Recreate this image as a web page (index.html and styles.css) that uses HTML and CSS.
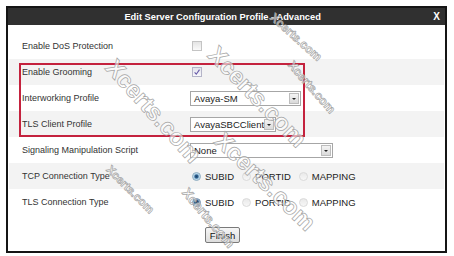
FILE: index.html
```html
<!DOCTYPE html>
<html lang="en">
<head>
    <meta charset="UTF-8">
    <title>Edit Server Configuration Profile - Advanced</title>
    <link rel="stylesheet" href="styles.css">
</head>
<body>
<div class="page">
    <div class="dialog">
        <div class="dialog-head">
            <span class="title">Edit Server Configuration Profile - Advanced</span>
            <span class="close">X</span>
        </div>
        <div class="dialog-body">
            <div class="row">
                <div class="label">Enable DoS Protection</div>
                <div class="value"><span class="check"></span></div>
            </div>
            <div class="row alt">
                <div class="label">Enable Grooming</div>
                <div class="value">
                    <span class="check checked">
                        <svg width="8" height="8" viewBox="0 0 8 8"><path d="M1.6 4.3 L3.3 6.2 L6.5 1.6" fill="none" stroke="#6659a8" stroke-width="1.1"/></svg>
                    </span>
                </div>
            </div>
            <div class="row">
                <div class="label">Interworking Profile</div>
                <div class="value">
                    <div class="select select-mid"><span class="select-text">Avaya-SM</span><span class="select-btn"></span></div>
                </div>
            </div>
            <div class="row alt">
                <div class="label">TLS Client Profile</div>
                <div class="value">
                    <div class="select select-short"><span class="select-text">AvayaSBCClient</span><span class="select-btn"></span></div>
                </div>
            </div>
            <div class="row">
                <div class="label">Signaling Manipulation Script</div>
                <div class="value">
                    <div class="select select-long"><span class="select-text">None</span><span class="select-btn"></span></div>
                </div>
            </div>
            <div class="row alt">
                <div class="label">TCP Connection Type</div>
                <div class="value radios">
                    <span class="opt"><span class="radio on"></span>SUBID</span>
                    <span class="opt"><span class="radio"></span>PORTID</span>
                    <span class="opt"><span class="radio"></span>MAPPING</span>
                </div>
            </div>
            <div class="row">
                <div class="label">TLS Connection Type</div>
                <div class="value radios">
                    <span class="opt"><span class="radio on dark"></span>SUBID</span>
                    <span class="opt"><span class="radio"></span>PORTID</span>
                    <span class="opt"><span class="radio"></span>MAPPING</span>
                </div>
            </div>
            <div class="actions">
                <button class="btn">Finish</button>
            </div>
        </div>
    </div>

    <!-- annotation box + watermarks drawn over the dialog -->
    <div class="highlight"></div>
    <span class="wm wm-a">Xcerts.com</span>
    <span class="wm wm-b">Xcerts.com</span>
    <span class="wm wm-c">Xcerts.com</span>
    <span class="wm wm-d">Xcerts.com</span>
    <span class="wm wm-e">Xcerts.com</span>
    <span class="wm wm-f">Xcerts.com</span>
    <span class="wm wm-g">Xcerts.com</span>
</div>
</body>
</html>
```

FILE: styles.css
```css
body {
    margin: 0;
    background-color: #fff;
    font-family: "Liberation Sans", Arial, sans-serif;
}

.page {
    position: relative;
    width: 454px;
    height: 256px;
    overflow: hidden;
    padding-top: 6px;
    box-sizing: border-box;
}

.dialog {
    margin-left: 6px;
    width: 441px;
    border: 2px solid #151515;
    box-sizing: border-box;
    background-color: #fff;
}

.dialog-head {
    height: 17px;
    display: flex;
    align-items: center;
    background-color: #303030;
    color: #fff;
    font-weight: bold;
    font-size: 9.3px;
}

.title {
    flex: 1;
    text-align: center;
    padding-left: 4px;
}

.close {
    font-size: 10px;
    padding-right: 5px;
}

.dialog-body {
    padding: 8px 1px 8px;
}

.row {
    height: 26px;
    display: flex;
    align-items: center;
}

.row.alt {
    background-color: #f3f3f3;
}

.label {
    width: 181px;
    padding-left: 13px;
    box-sizing: border-box;
    font-size: 9px;
    color: #333;
}

.value {
    display: flex;
    align-items: center;
    font-size: 9.5px;
    color: #222;
}

.check {
    width: 10px;
    height: 10px;
    margin-left: 2px;
    box-sizing: border-box;
    border: 1px solid #c4c4c4;
    background: linear-gradient(#e4e4e4, #fafafa);
    display: flex;
    align-items: center;
    justify-content: center;
}

.check.checked {
    border-color: #b4b4c8;
    background: linear-gradient(#e2e2ec, #f8f8fb);
}

.select {
    height: 15px;
    box-sizing: border-box;
    border: 1px solid #a6a6a6;
    background-color: #fff;
    display: flex;
    align-items: center;
    justify-content: space-between;
}

.select-mid { width: 111px; }
.select-short { width: 86px; }
.select-long { width: 143px; }

.select-text {
    padding-left: 3px;
    white-space: nowrap;
}

.select-btn {
    width: 10px;
    height: 11px;
    margin-right: 1px;
    box-sizing: border-box;
    border: 1px solid #bdbdbd;
    background: linear-gradient(#f4f4f4, #dadada);
    position: relative;
}

.select-btn::after {
    content: "";
    position: absolute;
    left: 2px;
    top: 4px;
    border-left: 2px solid transparent;
    border-right: 2px solid transparent;
    border-top: 2px solid #222;
}

.radios {
    gap: 8px;
    margin-left: 2px;
}

.opt {
    display: flex;
    align-items: center;
    gap: 4px;
}

.radio {
    width: 9px;
    height: 9px;
    border-radius: 50%;
    box-sizing: border-box;
    border: 1px solid #dadada;
    background: linear-gradient(#e9e9e9, #f7f7f7);
}

.radio.on {
    border-color: #8aaabf;
    background: radial-gradient(circle at 50% 50%, #1d3f66 0, #2b5f8e 1.5px, #a8cbe2 2.6px, #e2eef6 4px);
}

.radio.on.dark {
    border-color: #6f8fae;
    background: radial-gradient(circle at 50% 45%, #1a3a60 0, #25507c 1.8px, #88aac8 2.8px, #c8dbea 4px);
}

.actions {
    display: flex;
    justify-content: center;
    padding-top: 12px;
}

.btn {
    height: 16px;
    padding: 0 4px;
    margin-right: 8px;
    border: 1px solid #7a7a7a;
    border-radius: 2px;
    background: linear-gradient(#f6f6f6, #dddddd);
    font-family: "Liberation Sans", Arial, sans-serif;
    font-size: 9.5px;
    color: #111;
}

.highlight {
    position: absolute;
    left: 19px;
    top: 63px;
    width: 286px;
    height: 74px;
    box-sizing: border-box;
    border: 2px solid #c4223e;
}

.wm {
    position: absolute;
    font-family: "Liberation Sans", Arial, sans-serif;
    font-weight: bold;
    line-height: 1;
    white-space: nowrap;
    color: rgba(255, 255, 255, 0.6);
    -webkit-text-stroke: 0.7px #a4a4a4;
    transform-origin: 0 0;
    transform: rotate(48deg);
}

.wm-a { left: 119px; top: 55px; font-size: 24px; }
.wm-b { left: 221px; top: 42px; font-size: 24px; transform: rotate(46deg); }
.wm-c { left: 227px; top: 128px; font-size: 24px; transform: rotate(44deg); }
.wm-d { left: 112px; top: 164px; font-size: 11.5px; transform: rotate(45deg); }
.wm-e { left: 190px; top: 186px; font-size: 13.5px; transform: rotate(50deg); }
.wm-f { left: 295px; top: 59px; font-size: 12px; transform: rotate(49deg); }
.wm-g { left: 276px; top: 11px; font-size: 12px; transform: rotate(42deg); }
```
